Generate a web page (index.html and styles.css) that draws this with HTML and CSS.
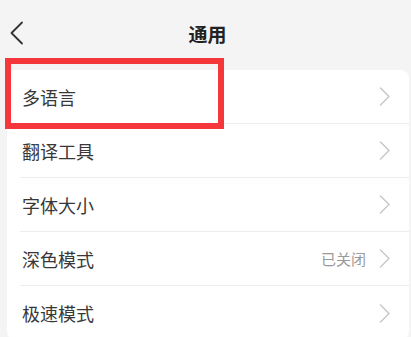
FILE: index.html
```html
<!DOCTYPE html>
<html lang="zh-CN">
<head>
    <meta charset="UTF-8">
    <meta name="viewport" content="width=device-width, initial-scale=1.0">
    <title>通用</title>
    <link rel="stylesheet" href="styles.css">
</head>
<body>
    <div class="header">
        <a class="back" href="#">
            <svg width="16" height="24" viewBox="0 0 16 24"><path d="M13 1.5 L2.5 12 L13 22.5" fill="none" stroke="#333" stroke-width="1.8" stroke-linecap="round" stroke-linejoin="round"/></svg>
        </a>
        <h1>通用</h1>
    </div>

    <div class="card">
        <div class="row">
            <span class="label">多语言</span>
            <span class="chevron"><svg width="12" height="19" viewBox="0 0 12 19"><path d="M1.5 1 L10 9.5 L1.5 18" fill="none" stroke="#c9c9c9" stroke-width="1.5" stroke-linecap="round" stroke-linejoin="round"/></svg></span>
        </div>
        <div class="row">
            <span class="label">翻译工具</span>
            <span class="chevron"><svg width="12" height="19" viewBox="0 0 12 19"><path d="M1.5 1 L10 9.5 L1.5 18" fill="none" stroke="#c9c9c9" stroke-width="1.5" stroke-linecap="round" stroke-linejoin="round"/></svg></span>
        </div>
        <div class="row">
            <span class="label">字体大小</span>
            <span class="chevron"><svg width="12" height="19" viewBox="0 0 12 19"><path d="M1.5 1 L10 9.5 L1.5 18" fill="none" stroke="#c9c9c9" stroke-width="1.5" stroke-linecap="round" stroke-linejoin="round"/></svg></span>
        </div>
        <div class="row">
            <span class="label">深色模式</span>
            <span class="value">已关闭</span>
            <span class="chevron"><svg width="12" height="19" viewBox="0 0 12 19"><path d="M1.5 1 L10 9.5 L1.5 18" fill="none" stroke="#c9c9c9" stroke-width="1.5" stroke-linecap="round" stroke-linejoin="round"/></svg></span>
        </div>
        <div class="row">
            <span class="label">极速模式</span>
            <span class="chevron"><svg width="12" height="19" viewBox="0 0 12 19"><path d="M1.5 1 L10 9.5 L1.5 18" fill="none" stroke="#c9c9c9" stroke-width="1.5" stroke-linecap="round" stroke-linejoin="round"/></svg></span>
        </div>
    </div>

    <div class="highlight"></div>
</body>
</html>
```

FILE: styles.css
```css
body {
    margin: 0;
    padding: 0;
    background: #f4f4f4;
    font-family: "Noto Sans CJK SC", "Noto Sans", sans-serif;
    color: #333;
    overflow: hidden;
    position: relative;
}
.header {
    height: 66px;
    display: flex;
    align-items: center;
    justify-content: center;
    position: relative;
}
.header h1 {
    margin: 0 0 0 4px;
    font-size: 19px;
    font-weight: bold;
    color: #222;
}
.back {
    position: absolute;
    left: 9px;
    top: 21px;
    display: block;
    width: 16px;
    height: 24px;
}
.back svg {
    display: block;
}
.card {
    background: #fff;
    margin: 4px 2px 0 7px;
    border-radius: 8px;
}
.row {
    height: 54px;
    margin-left: 13px;
    padding: 0 18px 0 2px;
    display: flex;
    align-items: center;
    border-bottom: 1px solid #ececec;
    box-sizing: border-box;
}
.row:last-child {
    border-bottom: none;
}
.label {
    flex: 1;
    font-size: 18px;
    color: #383838;
}
.value {
    font-size: 15px;
    color: #9a9a9a;
    margin-right: 13px;
}
.chevron svg {
    display: block;
}
.highlight {
    position: absolute;
    left: 5px;
    top: 58px;
    width: 219px;
    height: 71px;
    border: 6px solid #f5363a;
    box-sizing: border-box;
}
```
